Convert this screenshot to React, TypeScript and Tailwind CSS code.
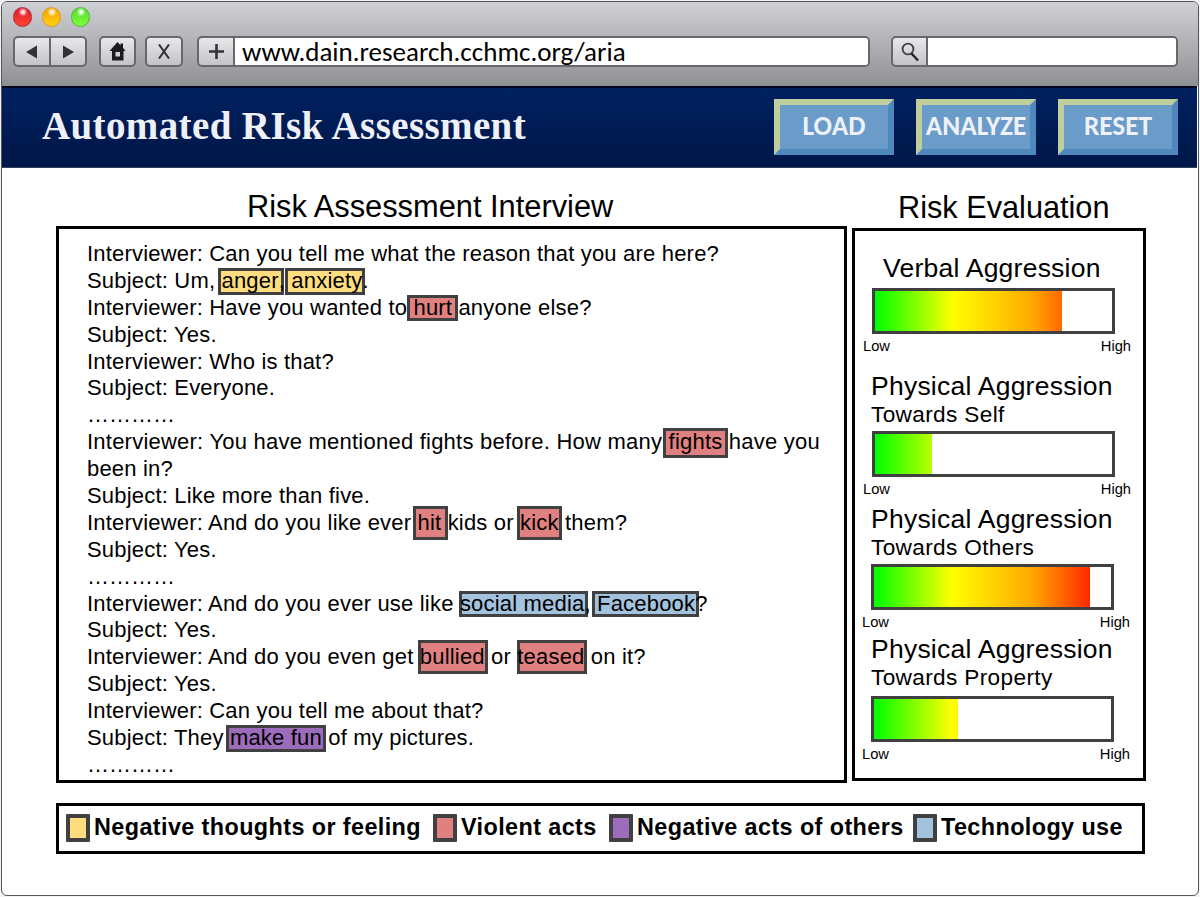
import { Fragment } from "react";
import clsx from "clsx";

type Tone = "feeling" | "violent" | "others" | "tech";

type Segment = string | { text: string; tone: Tone; box: string };

interface Line {
  parts: Segment[];
  tracking?: string;
}

const toneColor: Record<Tone, string> = {
  feeling: "bg-[#ffdc7e]",
  violent: "bg-[#e08080]",
  others: "bg-[#9c6cba]",
  tech: "bg-[#a3c2dd]",
};

const transcript: Line[] = [
  { parts: ["Interviewer: Can you tell me what the reason that you are here?"] },
  {
    parts: [
      "Subject: Um, ",
      { text: "anger", tone: "feeling", box: "left-[-4px] top-0 w-[66px] h-[27px]" },
      ", ",
      { text: "anxiety", tone: "feeling", box: "left-[-6px] top-0 w-[80px] h-[27px]" },
      ".",
    ],
  },
  {
    parts: [
      "Interviewer: Have you wanted to ",
      { text: "hurt", tone: "violent", box: "left-[-6px] top-0 w-[51px] h-[26px]" },
      " anyone else?",
    ],
  },
  { parts: ["Subject: Yes."] },
  { parts: ["Interviewer: Who is that?"] },
  { parts: ["Subject: Everyone."] },
  { parts: ["…………"], tracking: "tracking-normal" },
  {
    parts: [
      "Interviewer: You have mentioned fights before. How many ",
      { text: "fights", tone: "violent", box: "left-[-6px] top-[-1px] w-[65px] h-[30px]" },
      " have you",
    ],
    tracking: "tracking-[0.23px]",
  },
  { parts: ["been in?"] },
  { parts: ["Subject: Like more than five."] },
  {
    parts: [
      "Interviewer: And do you like ever ",
      { text: "hit", tone: "violent", box: "left-[-5px] top-[-4px] w-[35px] h-[34px]" },
      " kids or ",
      { text: "kick", tone: "violent", box: "left-[-3px] top-[-4px] w-[45px] h-[34px]" },
      " them?",
    ],
  },
  { parts: ["Subject: Yes."] },
  { parts: ["…………"], tracking: "tracking-normal" },
  {
    parts: [
      "Interviewer: And do you ever use like ",
      { text: "social media", tone: "tech", box: "left-[-1px] top-0 w-[129px] h-[26px]" },
      ", ",
      { text: "Facebook", tone: "tech", box: "left-[-5px] top-0 w-[107px] h-[26px]" },
      "?",
    ],
  },
  { parts: ["Subject: Yes."] },
  {
    parts: [
      "Interviewer: And do you even get ",
      { text: "bullied", tone: "violent", box: "left-[-2px] top-[-4px] w-[70px] h-[34px]" },
      " or ",
      { text: "teased", tone: "violent", box: "left-0 top-[-4px] w-[70px] h-[34px]" },
      " on it?",
    ],
  },
  { parts: ["Subject: Yes."] },
  { parts: ["Interviewer: Can you tell me about that?"] },
  {
    parts: [
      "Subject: They ",
      { text: "make fun", tone: "others", box: "left-[-4px] top-0 w-[100px] h-[27px]" },
      " of my pictures.",
    ],
  },
  { parts: ["…………"], tracking: "tracking-normal" },
];

const meterGradient =
  "bg-[linear-gradient(to_right,#00ff00_0px,#ffff00_78px,#ffaa00_157px,#ff0000_234px)]";

const meters = [
  { title: "Verbal Aggression", value: 187, headClass: "mt-[21px] pl-[12px]", barClass: "mt-[4px]" },
  { title: "Physical Aggression", sub: "Towards Self", value: 57, headClass: "mt-[12px]", barClass: "mt-[3px]" },
  { title: "Physical Aggression", sub: "Towards Others", value: 216, headClass: "mt-[2px]", barClass: "-ml-px mt-[3px]" },
  { title: "Physical Aggression", sub: "Towards Property", value: 84, headClass: "mt-[-1px]", barClass: "-ml-px mt-[5px]" },
];

const legend: { label: string; tone: Tone; width: string }[] = [
  { label: "Negative thoughts or feeling", tone: "feeling", width: "w-[367px]" },
  { label: "Violent acts", tone: "violent", width: "w-[176px]" },
  { label: "Negative acts of others", tone: "others", width: "w-[304px]" },
  { label: "Technology use", tone: "tech", width: "w-[220px]" },
];

const chromeButton =
  "flex h-[31px] items-center justify-center rounded-[5px] border-2 border-[#68686b] bg-linear-to-b from-[#e9e9ec] to-[#c3c3c8]";

function Light({ className }: { className: string }) {
  return (
    <span className={clsx("flex h-[20px] w-[19px] justify-center rounded-full border", className)}>
      <span className="mt-[1px] h-[6px] w-[6px] rounded-full bg-white/90 blur-[1px]" />
    </span>
  );
}

function BrowserChrome() {
  return (
    <div className="h-[84px] bg-linear-to-b from-[#cfd0d4] via-[#b1b1b5] to-[#8f9092] pt-[5px]">
      <div className="flex gap-[10px] pl-[11px]">
        <Light className="border-[#b5273a] bg-linear-to-b from-[#d8142f] to-[#ff4530]" />
        <Light className="border-[#d99a2a] bg-linear-to-b from-[#f5a300] to-[#ffd012]" />
        <Light className="border-[#56b043] bg-linear-to-b from-[#4fdc2a] to-[#7dff3c]" />
      </div>
      <div className="mt-[9px] flex pl-[11px]">
        <div className={clsx(chromeButton, "w-[74px]")}>
          <span className="flex h-full flex-1 items-center justify-center border-r-2 border-[#68686b]">
            <svg width="12" height="14" viewBox="0 0 12 14">
              <path d="M0 7 11 0.5V13.5Z" fill="#333335" />
            </svg>
          </span>
          <span className="flex h-full flex-1 items-center justify-center">
            <svg width="12" height="14" viewBox="0 0 12 14">
              <path d="M12 7 1 0.5V13.5Z" fill="#333335" />
            </svg>
          </span>
        </div>
        <div className={clsx(chromeButton, "ml-[12px] w-[37px]")}>
          <svg width="17" height="19" viewBox="0 0 17 19">
            <path
              d="M8.5 0 0.5 9H3v9.5h11.500V9h2L14 5.8V1.5h-2.500v1.700ZM6.500 10h4.500v4.500H6.500Z"
              fill="#1c1c1e"
              fillRule="evenodd"
            />
          </svg>
        </div>
        <div className={clsx(chromeButton, "ml-[9px] w-[38px]")}>
          <svg width="12" height="15" viewBox="0 0 12 15">
            <path d="M1 0.5 11 14.5M11 0.5 1 14.5" stroke="#333335" strokeWidth="2.1" />
          </svg>
        </div>
        <div className={clsx(chromeButton, "ml-[14px] w-[673px] overflow-hidden")}>
          <span className="flex h-full w-[36px] shrink-0 items-center justify-center border-r-2 border-[#68686b]">
            <svg width="15" height="15" viewBox="0 0 15 15">
              <path d="M7.5 0V15M0 7.5H15" stroke="#333335" strokeWidth="2.6" />
            </svg>
          </span>
          <span className="flex h-full flex-1 items-center bg-white pl-[7px]">
            <span className="font-['Carlito','Open_Sans',sans-serif] text-[27px] leading-none whitespace-nowrap text-black">
              www.dain.research.cchmc.org/aria
            </span>
          </span>
        </div>
        <div className={clsx(chromeButton, "ml-[21px] w-[287px] overflow-hidden")}>
          <span className="flex h-full w-[35px] shrink-0 items-center justify-center border-r-2 border-[#68686b]">
            <svg width="18" height="20" viewBox="0 0 18 20" fill="none">
              <circle cx="7" cy="7" r="5.4" stroke="#444447" strokeWidth="1.9" />
              <path d="m10.5 11.5 6.5 7" stroke="#222224" strokeWidth="2.4" />
            </svg>
          </span>
          <span className="h-full flex-1 bg-white" />
        </div>
      </div>
    </div>
  );
}

function HeaderButton({ label }: { label: string }) {
  return (
    <button className="flex h-[56px] w-[120px] items-center justify-center border-[6px] border-t-[#bfcf9c] border-r-[#4f88bd] border-b-[#4f88bd] border-l-[#bfcf9c] bg-[#6a9bc9]">
      <span className="pb-[3px] font-['Carlito','Open_Sans',sans-serif] text-[27.3px] leading-none font-bold whitespace-nowrap text-[#eef1f8]">
        {label}
      </span>
    </button>
  );
}

function Header() {
  return (
    <header className="flex h-[82px] w-[1195px] justify-between border-t-2 border-b border-t-[#05081c] border-b-[#32405f] bg-linear-to-b from-[#002060] to-[#001748] pr-[19px] pl-[40px]">
      <h1 className="mt-[16px] font-['Liberation_Serif',serif] text-[39px] leading-[44px] font-bold tracking-[0.38px] whitespace-nowrap text-[#eef0f7]">
        Automated RIsk Assessment
      </h1>
      <div className="mt-[11px] flex gap-[22px]">
        <HeaderButton label="LOAD" />
        <HeaderButton label="ANALYZE" />
        <HeaderButton label="RESET" />
      </div>
    </header>
  );
}

function TranscriptLine({ parts, tracking = "tracking-[0.19px]" }: Line) {
  return (
    <p className={clsx("isolate h-[26.9px] whitespace-pre", tracking)}>
      {parts.map((part, i) =>
        typeof part === "string" ? (
          <Fragment key={i}>{part}</Fragment>
        ) : (
          <mark key={i} className="relative inline-block bg-transparent text-black">
            <span className={clsx("absolute -z-10 border-[3px] border-[#404040]", toneColor[part.tone], part.box)} />
            {part.text}
          </mark>
        )
      )}
    </p>
  );
}

export default function App() {
  return (
    <div className="h-[897px] w-[1200px] overflow-hidden bg-[#f4f4f4] pt-[1px] pl-[1px] font-['Liberation_Sans',Arial,sans-serif] text-black">
      <div className="h-[895px] w-[1198px] overflow-hidden rounded-[6px] border border-[#555557] bg-white">
        <BrowserChrome />
        <Header />
        <main className="pl-[54px]">
          <div className="flex gap-[5px]">
            <section>
              <h2 className="h-[58px] pt-[20px] pl-[191px] text-[30.8px] leading-[38px] whitespace-nowrap">
                Risk Assessment Interview
              </h2>
              <div className="h-[557px] w-[791px] border-3 border-black pt-[12px] pl-[28px] text-[22px] leading-[26.9px]">
                {transcript.map((line, i) => (
                  <TranscriptLine key={i} {...line} />
                ))}
              </div>
            </section>
            <section>
              <h2 className="h-[60px] pt-[21px] pl-[46px] text-[30.7px] leading-[38px] whitespace-nowrap">
                Risk Evaluation
              </h2>
              <div className="h-[553px] w-[294px] border-3 border-black pl-[8px]">
                {meters.map((m, i) => (
                  <div key={i}>
                    <div className={clsx("ml-[8px] whitespace-nowrap", m.headClass)}>
                      <h3 className="text-[26.5px] leading-[32px] tracking-[0.24px]">{m.title}</h3>
                      {m.sub && (
                        <p className="text-[22.6px] leading-[26px] tracking-[0.36px]">{m.sub}</p>
                      )}
                    </div>
                    <div className={m.barClass}>
                      <div className="ml-[9px] h-[46px] w-[243px] border-3 border-[#404040]">
                        <div className={clsx("h-full", meterGradient)} style={{ width: m.value }} />
                      </div>
                      <div className="flex w-[268px] justify-between text-[14.7px] leading-[24px]">
                        <span>Low</span>
                        <span>High</span>
                      </div>
                    </div>
                  </div>
                ))}
              </div>
            </section>
          </div>
          <div className="mt-[20px] flex h-[51px] w-[1089px] items-center border-3 border-black pb-[1px] pl-[7px]">
            {legend.map((item) => (
              <div key={item.label} className={clsx("flex items-center gap-[4px]", item.width)}>
                <span className={clsx("h-[28px] w-[24px] shrink-0 rounded-[1px] border-4 border-[#404040]", toneColor[item.tone])} />
                <span className="text-[23.4px] leading-none font-bold tracking-[0.4px] whitespace-nowrap">
                  {item.label}
                </span>
              </div>
            ))}
          </div>
        </main>
      </div>
    </div>
  );
}
